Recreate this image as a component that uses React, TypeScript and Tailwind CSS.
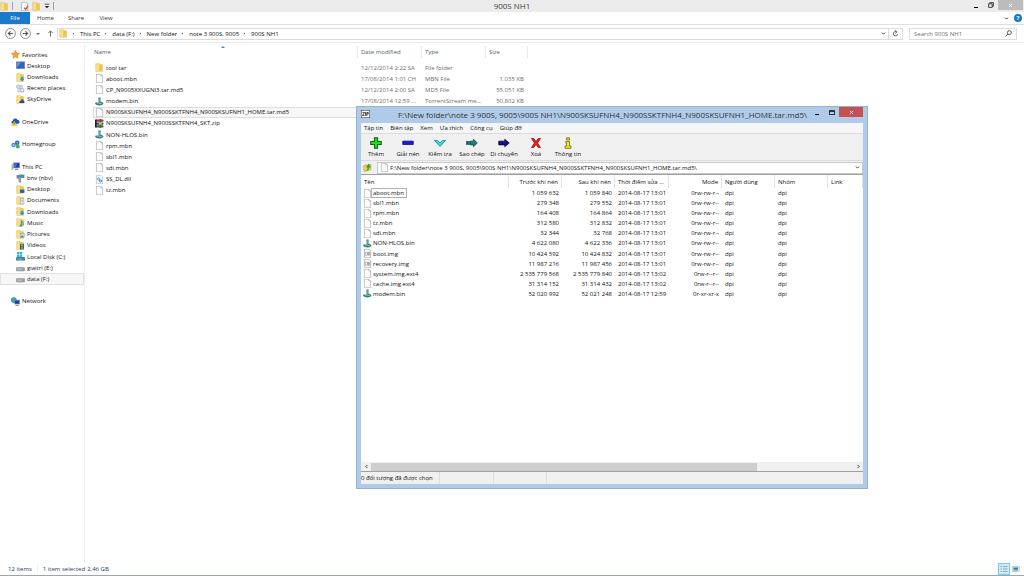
import React from "react";

type IconProps = { className?: string };
type IconType = React.FC<IconProps>;

const svg = (body: React.ReactNode): IconType => {
  const Icon: IconType = ({ className = "size-[9px]" }) => (
    <svg viewBox="0 0 16 16" className={`shrink-0 ${className}`} aria-hidden="true">
      {body}
    </svg>
  );
  return Icon;
};

// Folder body shared by all the library folders
const folderShape = (
  <>
    <path d="M1 1h7l1 1v13H1z" fill="#dfb23c" />
    <path d="M2 2l6-1v14l-6-1z" fill="#f8e08a" />
    <path d="M8 2h5l1 1v12H8z" fill="#ecc757" />
  </>
);

const FolderIcon = svg(folderShape);
const FileIcon = svg(
  <path d="M2.5 0.5h8l3 3v12h-11z M10.5 0.5v3h3" fill="#fdfdfd" stroke="#9a9a9a" />
);
const TorrentIcon = svg(
  <>
    <circle cx="8" cy="3" r="2.5" fill="#5f9cb4" />
    <path d="M6 5h4v4H6z" fill="#5a9fb8" />
    <path d="M0 11c1-3 4 0 8-2 2-1 5 0 7 2 0 2-3 4-7 4s-8-2-8-4z" fill="#2f7f86" />
    <path d="M4 11c3-2 5 2 8 0" stroke="#d6e89a" strokeWidth="1.500" fill="none" />
  </>
);
const RarIcon = svg(
  <>
    <rect x="1" y="1" width="14" height="4" rx="1" fill="#b02a50" />
    <rect x="1" y="6" width="14" height="4" rx="1" fill="#2452a0" />
    <rect x="1" y="11" width="14" height="4" rx="1" fill="#1f7a3f" />
    <rect x="8" y="0" width="3" height="16" fill="#7a4a2b" />
    <rect x="7" y="6" width="5" height="4" fill="#e5c15a" />
    <rect x="0" y="1" width="3" height="14" fill="#3a1828" />
  </>
);
const DllIcon = svg(
  <>
    <path d="M2.5 0.5h8l3 3v12h-11z" fill="#f6fafc" stroke="#9ab0bd" />
    <circle cx="6.500" cy="7" r="2" fill="none" stroke="#4f8fc0" strokeWidth="1.500" />
    <circle cx="10" cy="10.500" r="2" fill="none" stroke="#3a78ad" strokeWidth="1.500" />
  </>
);
const ImgIcon = svg(
  <>
    <path d="M2.500 0.500h8l3 3v12h-11z" fill="#fafafa" stroke="#909090" />
    <path d="M4 6h3M4 6v5h3M8 6h4v5H8zM10 6v5M8 8.500h4" fill="none" stroke="#808080" />
  </>
);
const StarIcon = svg(
  <path d="M8 0.800l2.200 4.700 5 .6-3.700 3.500 1 5.100L8 12.200l-4.500 2.500 1-5.100L.8 6.100l5-.6z" fill="#f9a52b" stroke="#e07a1a" />
);
const DesktopIcon = svg(
  <>
    <rect x="0.500" y="1.500" width="15" height="12" fill="#2f67b8" stroke="#6f7f9a" />
    <path d="M1 2h8l-6 8H1z" fill="#5b93dc" />
  </>
);
const DownloadsIcon = svg(
  <>
    {folderShape}
    <path d="M9 7h4v3h2.500L11 15 6.500 10H9z" fill="#2a9ae0" />
  </>
);
const RecentIcon = svg(
  <>
    <path d="M1 2h10v3l3 9H4L3 6H1z" fill="#dce6ee" stroke="#9aa9b5" />
    <path d="M4 5h5M5 8h4" stroke="#7f94a5" />
    <circle cx="11" cy="11" r="3" fill="#eef6fb" stroke="#7e9bb0" />
  </>
);
const SkyDriveIcon = svg(
  <>
    {folderShape}
    <path d="M6 14c-1-3 2-4 3-4 0-4 5-3 5 1 2 0 2 3 0 3z" fill="#1f4f98" />
  </>
);
const OneDriveIcon = svg(
  <>
    <path d="M3 12c-4-1-2-5 0-5 0-5 7-6 8-2 4-1 6 6 2 7z" fill="#1a56b4" />
    <path d="M6 7l5 8H1z" fill="#ffd02e" stroke="#b88a12" strokeWidth="0.500" />
    <path d="M6 10v3" stroke="#3a3000" strokeWidth="1.200" />
  </>
);
const HomegroupIcon = svg(
  <>
    <circle cx="4.500" cy="9" r="4" fill="#3f8fe0" />
    <circle cx="11" cy="5" r="4" fill="#2a5fc0" />
    <circle cx="12" cy="11.500" r="3.500" fill="#46b04a" />
    <circle cx="4.500" cy="9" r="1.500" fill="#c6e4fb" />
    <circle cx="11" cy="4.500" r="1.500" fill="#8fc3f3" />
  </>
);
const PcIcon = svg(
  <>
    <path d="M1 4h3v10H1z" fill="#a8b4c4" />
    <rect x="4.500" y="1.500" width="11" height="9" fill="#2438b8" stroke="#8f9bb5" />
    <path d="M6 3h5l-3 6H6z" fill="#5878e0" />
    <path d="M7 12h6v2H7z" fill="#76869c" />
  </>
);
const PhoneIcon = svg(
  <>
    <path d="M5 1h10v6H5z" fill="#4a90a8" />
    <path d="M4 5h5v10H5z" fill="#8e9da8" />
    <path d="M1 2h5v6H1z" fill="#6e8899" />
  </>
);
const DesktopFolderIcon = svg(
  <>
    {folderShape}
    <rect x="7" y="8" width="8" height="6" fill="#2d62b0" />
  </>
);
const DocumentsIcon = svg(
  <>
    {folderShape}
    <path d="M8 5h6v9H8z" fill="#eef5fb" stroke="#8aa5bf" />
    <path d="M9.500 8h3M9.500 10h3" stroke="#7a98b8" />
  </>
);
const MusicIcon = svg(
  <>
    {folderShape}
    <path d="M10 14V5c1 3 4 3 3 7" fill="none" stroke="#2387c4" strokeWidth="1.500" />
    <circle cx="8.500" cy="13.500" r="2" fill="#2387c4" />
  </>
);
const PicturesIcon = svg(
  <>
    {folderShape}
    <rect x="7.500" y="6.500" width="7" height="7" fill="#cde8f2" stroke="#7899a8" />
    <path d="M8 13l3-4 3 4z" fill="#3c8c96" />
  </>
);
const VideosIcon = svg(
  <>
    {folderShape}
    <rect x="7" y="5" width="7" height="10" fill="#44525c" />
    <rect x="9" y="6" width="3" height="3" fill="#8ec8e8" />
    <rect x="9" y="10" width="3" height="4" fill="#6fa8c8" />
  </>
);
const SystemDiskIcon = svg(
  <>
    <path d="M2 0h4v4H2zM7 0h4v4H7zM2 5h4v4H2zM7 5h4v4H7z" fill="#1fb3e8" />
    <path d="M0 10l2-1h12l2 1v5H0z" fill="#3d7f92" />
    <path d="M2 12.500h9" stroke="#bfe0ea" />
  </>
);
const DiskIcon = svg(
  <>
    <path d="M0 9l2-2h12l2 2z" fill="#d9d9d9" />
    <rect x="0.500" y="8.500" width="15" height="5.500" rx="1" fill="#b6b9b9" stroke="#777" />
    <rect x="11" y="10" width="3" height="2" fill="#51b34c" />
  </>
);
const NetworkIcon = svg(
  <>
    <circle cx="5" cy="5.500" r="5" fill="#2c8fd0" />
    <path d="M2 3c3-3 5 0 4 2S3 8 2 7z" fill="#53b85a" />
    <rect x="6.500" y="5.500" width="9" height="7" fill="#1d3db2" stroke="#93a4c0" />
    <path d="M8 14h6v1.500H8z" fill="#6c7d92" />
  </>
);
const NoteIcon = svg(
  <>
    <path d="M2.500 0.500h8l3 3v12h-11z" fill="#fff" stroke="#888" />
    <path d="M7 10l3 3 4-6" fill="none" stroke="#d9532c" strokeWidth="2.500" />
  </>
);

const Chevron = svg(<path d="M3 5l5 5 5-5" fill="none" stroke="#333" strokeWidth="3" />);
const TinyArrow = svg(<path d="M5 2l6 6-6 6z" fill="#444" />);
const CloseX = svg(<path d="M3 3l10 10M13 3L3 13" stroke="#fff" strokeWidth="3" />);

type NavItem = { label: string; icon: IconType; child?: boolean; active?: boolean };

// null is an empty line between two groups
const NAV: (NavItem | null)[] = [
  { label: "Favorites", icon: StarIcon },
  { label: "Desktop", icon: DesktopIcon, child: true },
  { label: "Downloads", icon: DownloadsIcon, child: true },
  { label: "Recent places", icon: RecentIcon, child: true },
  { label: "SkyDrive", icon: SkyDriveIcon, child: true },
  null,
  { label: "OneDrive", icon: OneDriveIcon },
  null,
  { label: "Homegroup", icon: HomegroupIcon },
  null,
  { label: "This PC", icon: PcIcon },
  { label: "bnv (nbv)", icon: PhoneIcon, child: true },
  { label: "Desktop", icon: DesktopFolderIcon, child: true },
  { label: "Documents", icon: DocumentsIcon, child: true },
  { label: "Downloads", icon: DownloadsIcon, child: true },
  { label: "Music", icon: MusicIcon, child: true },
  { label: "Pictures", icon: PicturesIcon, child: true },
  { label: "Videos", icon: VideosIcon, child: true },
  { label: "Local Disk (C:)", icon: SystemDiskIcon, child: true },
  { label: "giaitri (E:)", icon: DiskIcon, child: true },
  { label: "data (F:)", icon: DiskIcon, child: true, active: true },
  null,
  { label: "Network", icon: NetworkIcon },
];

type FileRow = { name: string; icon: IconType; date?: string; type?: string; size?: string; active?: boolean };

const FILES: FileRow[] = [
  { name: "tool tar", icon: FolderIcon, date: "12/12/2014 2:22 SA", type: "File folder" },
  { name: "aboot.mbn", icon: FileIcon, date: "17/08/2014 1:01 CH", type: "MBN File", size: "1.035 KB" },
  { name: "CP_N9005XXUGNI3.tar.md5", icon: FileIcon, date: "12/12/2014 2:00 SA", type: "MD5 File", size: "55.051 KB" },
  { name: "modem.bin", icon: TorrentIcon, date: "17/08/2014 12:59 ...", type: "TorrentStream me...", size: "50.802 KB" },
  { name: "N900SKSUFNH4_N900SSKTFNH4_N900SKSUFNH1_HOME.tar.md5", icon: FileIcon, active: true },
  { name: "N900SKSUFNH4_N900SSKTFNH4_SKT.zip", icon: RarIcon },
  { name: "NON-HLOS.bin", icon: TorrentIcon },
  { name: "rpm.mbn", icon: FileIcon },
  { name: "sbl1.mbn", icon: FileIcon },
  { name: "sdi.mbn", icon: FileIcon },
  { name: "SS_DL.dll", icon: DllIcon },
  { name: "tz.mbn", icon: FileIcon },
];

const PATH = ["This PC", "data (F:)", "New folder", "note 3 900S, 9005", "900S NH1"];

const ARCHIVE_PATH = "F:\\New folder\\note 3 900S, 9005\\900S NH1\\N900SKSUFNH4_N900SSKTFNH4_N900SKSUFNH1_HOME.tar.md5\\";

const MENU = ["Tập tin", "Biên tập", "Xem", "Ưa thích", "Công cụ", "Giúp đỡ"];

const TOOLS: { label: string; icon: IconType }[] = [
  { label: "Thêm", icon: svg(<path d="M6 1h4v5h5v4h-5v5H6v-5H1V6h5z" fill="#1fe01f" stroke="#0b6a0b" strokeWidth="1.500" />) },
  { label: "Giải nén", icon: svg(<path d="M1 5.500h14v4.500H1z" fill="#1818e8" stroke="#0a0a80" />) },
  { label: "Kiểm tra", icon: svg(<path d="M0.500 4.500h4L8 8l3.500-3.500h4L8 12.500z" fill="#27e0e8" stroke="#0c8088" />) },
  {
    label: "Sao chép",
    icon: svg(<path d="M0.500 6h1.500v4H0.500zM3 6h2v4H3zM6 5.500h4V3l5 5-5 5v-2.500H6z" fill="#178080" stroke="#0a4a4a" />),
  },
  { label: "Di chuyển", icon: svg(<path d="M1 5.500h8V3l6 5-6 5v-2.500H1z" fill="#10108a" stroke="#050540" />) },
  { label: "Xoá", icon: svg(<path d="M2 2h3l3 4 3-4h3l-4 6 4 6h-3l-3-4-3 4H2l4-6z" fill="#f01c1c" stroke="#8a0808" />) },
  {
    label: "Thông tin",
    icon: svg(<path d="M6 1h4v3H6zM5 6h5v6h2v3H4v-3h2V8H5z" fill="#f0e41c" stroke="#6a6408" />),
  },
];

type Entry = [string, IconType, string, string, string, string];

const ENTRIES: Entry[] = [
  ["aboot.mbn", FileIcon, "1 059 632", "1 059 840", "2014-08-17 13:01", "0rw-rw-r--"],
  ["sbl1.mbn", FileIcon, "279 348", "279 552", "2014-08-17 13:01", "0rw-rw-r--"],
  ["rpm.mbn", FileIcon, "164 408", "164 864", "2014-08-17 13:01", "0rw-rw-r--"],
  ["tz.mbn", FileIcon, "312 580", "312 832", "2014-08-17 13:01", "0rw-rw-r--"],
  ["sdi.mbn", FileIcon, "32 344", "32 768", "2014-08-17 13:01", "0rw-rw-r--"],
  ["NON-HLOS.bin", TorrentIcon, "4 622 080", "4 622 336", "2014-08-17 13:01", "0rw-rw-r--"],
  ["boot.img", ImgIcon, "10 424 592", "10 424 832", "2014-08-17 13:01", "0rw-rw-r--"],
  ["recovery.img", ImgIcon, "11 987 216", "11 987 456", "2014-08-17 13:01", "0rw-rw-r--"],
  ["system.img.ext4", FileIcon, "2 535 779 568", "2 535 779 840", "2014-08-17 13:02", "0rw-r--r--"],
  ["cache.img.ext4", FileIcon, "31 314 152", "31 314 432", "2014-08-17 13:02", "0rw-r--r--"],
  ["modem.bin", TorrentIcon, "52 020 992", "52 021 248", "2014-08-17 12:59", "0r-xr-xr-x"],
];

const TitleBar: React.FC = () => (
  <header className="grid h-3 grid-cols-3 items-center bg-[#ebebeb]">
    <div className="flex items-center gap-[3px]">
      <FolderIcon />
      <span className="h-2 w-px bg-gray-400" />
      <button aria-label="Properties" className="ml-1"><NoteIcon /></button>
      <button aria-label="New folder"><FolderIcon /></button>
      <button aria-label="Customize toolbar">
        <svg viewBox="0 0 8 8" className="size-[6px]"><path d="M1 1h6v1H1zM1 4h6L4 7z" fill="#222" /></svg>
      </button>
      <span className="h-2 w-px bg-gray-400" />
    </div>
    <h1 className="text-center text-[8px] leading-3 text-[#444]">900S NH1</h1>
    <div className="flex h-full items-start justify-end">
      <button aria-label="Minimize" className="mr-[10px] flex h-2 w-1 items-end"><span className="h-px w-full bg-black" /></button>
      <button aria-label="Restore" className="mr-1 pt-[2px]">
        <svg viewBox="0 0 10 10" className="size-[6px]">
          <path d="M3 3V1h6v6H7M1 3h6v6H1z" fill="none" stroke="#333" strokeWidth="1.500" />
        </svg>
      </button>
      <button aria-label="Close" className="mr-px flex h-[10px] w-[25px] items-center justify-center bg-[#bcbcbc]">
        <CloseX className="size-[5px]" />
      </button>
    </div>
  </header>
);

const Ribbon: React.FC = () => (
  <nav className="flex h-[13px] items-center border-b border-[#dfe0e1]">
    <button className="h-full w-[30px] bg-[#1979ca] text-white">File</button>
    <button className="w-[31px] text-[#333]">Home</button>
    <button className="w-[30px] text-[#333]">Share</button>
    <button className="w-[30px] text-[#333]">View</button>
    <button aria-label="Collapse the ribbon" className="ml-auto"><Chevron className="size-[5px]" /></button>
    <button aria-label="Help" className="mr-[2px] ml-[5px] flex size-2 items-center justify-center rounded-full bg-[#1979ca] font-bold text-white">
      ?
    </button>
  </nav>
);

const AddressBar: React.FC = () => (
  <div className="flex h-[18px] items-center border-b border-[#ededed] pr-[7px] pl-[5px]">
    <button aria-label="Back">
      <svg viewBox="0 0 20 20" className="size-[11px]">
        <circle cx="10" cy="10" r="9" fill="none" stroke="#777" strokeWidth="1.500" />
        <path d="M15 10H6M10 6l-4 4 4 4" fill="none" stroke="#555" strokeWidth="2" />
      </svg>
    </button>
    <button aria-label="Forward" className="ml-1">
      <svg viewBox="0 0 20 20" className="size-[11px]">
        <circle cx="10" cy="10" r="9" fill="none" stroke="#777" strokeWidth="1.500" />
        <path d="M5 10h9M10 6l4 4-4 4" fill="none" stroke="#555" strokeWidth="2" />
      </svg>
    </button>
    <button aria-label="Recent locations" className="ml-[5px]">
      <svg viewBox="0 0 8 8" className="size-1"><path d="M0 2h8L4 6z" fill="#666" /></svg>
    </button>
    <button aria-label="Up" className="ml-[7px]">
      <svg viewBox="0 0 16 16" className="size-[7px]">
        <path d="M8 15V3M3 7l5-5 5 5" fill="none" stroke="#555" strokeWidth="2" />
      </svg>
    </button>
    <div className="ml-[3px] flex h-3 flex-1 items-center border border-[#dcdcdc] pl-px">
      <FolderIcon />
      <ol className="flex flex-1 items-center text-[#111]">
        {PATH.map((part) => (
          <li key={part} className="flex items-center">
            <TinyArrow className="mr-[5px] ml-1 size-[3px]" />
            <button>{part}</button>
          </li>
        ))}
      </ol>
      <button aria-label="Previous locations" className="mr-[2px]"><Chevron className="size-[5px]" /></button>
      <button aria-label="Refresh" className="flex h-full w-[14px] items-center justify-center border-l border-[#dcdcdc]">
        <svg viewBox="0 0 16 16" className="size-[7px]">
          <path d="M13 9a5 5 0 1 1-3-5M7 1l4 3-3 4" fill="none" stroke="#555" strokeWidth="2" />
        </svg>
      </button>
    </div>
    <label className="ml-[6px] flex h-3 w-[108px] items-center border border-[#dcdcdc] px-1">
      <input
        type="search"
        aria-label="Search"
        placeholder="Search 900S NH1"
        className="min-w-0 flex-1 outline-none placeholder:text-[#6d6d6d]"
      />
      <svg viewBox="0 0 16 16" className="size-[7px]">
        <circle cx="10" cy="6" r="4.500" fill="none" stroke="#444" strokeWidth="2" />
        <path d="M7 9l-6 6" stroke="#444" strokeWidth="2" />
      </svg>
    </label>
  </div>
);

const Sidebar: React.FC = () => (
  <aside className="w-[85px] shrink-0 border-r border-[#f0f0f0] pt-[6px] text-[#111]">
    <ul className="flex h-[258px] flex-col">
      {NAV.map((item, i) =>
        item ? (
          <li key={i} className="flex min-h-0 flex-1">
            <button
              className={`flex w-full items-center gap-[2px] border ${item.child ? "pl-[15px]" : "pl-[10px]"} ${
                item.active ? "border-[#e2e2e2] bg-[#f7f7f7]" : "border-transparent"
              }`}
            >
              <item.icon />
              {item.label}
            </button>
          </li>
        ) : (
          <li key={i} className="flex-1" aria-hidden="true" />
        )
      )}
    </ul>
  </aside>
);

const FileList: React.FC = () => (
  <main className="min-w-0 flex-1 pt-[3px] pl-2">
    <table className="h-[150px] w-[435px] table-fixed border-separate border-spacing-0 text-left whitespace-nowrap text-[#6d6d6d]">
      <colgroup>
        <col className="w-[264px]" />
        <col className="w-16" />
        <col className="w-16" />
        <col className="w-[43px]" />
      </colgroup>
      <thead className="text-[#4c607a]">
        <tr className="h-4 align-top">
          <th className="pl-px font-normal">
            <div className="flex h-3 items-start">
              <span className="flex-1 leading-3">Name</span>
              <svg viewBox="0 0 8 4" className="mr-[132px] h-[2px] w-1"><path d="M0 4l4-4 4 4z" fill="#3c8dc5" /></svg>
            </div>
          </th>
          <th className="font-normal"><div className="h-3 border-l border-[#e2ecf5] pl-[3px] leading-3">Date modified</div></th>
          <th className="font-normal"><div className="h-3 border-l border-[#e2ecf5] pl-[3px] leading-3">Type</div></th>
          <th className="font-normal"><div className="h-3 border-x border-[#e2ecf5] pl-[3px] leading-3">Size</div></th>
        </tr>
      </thead>
      <tbody>
        {FILES.map((f) => (
          <tr key={f.name} className={f.active ? "bg-[#f7f7f7] outline outline-1 -outline-offset-1 outline-[#dedede]" : ""}>
            <td className="pl-[2px]">
              <div className="flex items-center gap-[2px] text-[#111]"><f.icon />{f.name}</div>
            </td>
            <td className="pl-1">{f.date}</td>
            <td className="pl-1">{f.type}</td>
            <td className="pr-1 text-right">{f.size}</td>
          </tr>
        ))}
      </tbody>
    </table>
  </main>
);

const StatusBar: React.FC = () => (
  <footer className="flex h-[13px] items-center border-b border-[#9aa5b0] pl-2 text-[#1e395b]">
    <span>12 items</span>
    <span className="ml-[5px] h-2 w-px bg-[#f0f0f0]" />
    <span className="ml-[5px]">1 item selected</span>
    <span className="ml-[2px]">2,46 GB</span>
    <button aria-label="Details view" className="ml-auto flex size-3 items-center justify-center border border-[#7fc8ea] bg-[#cfeaf7]">
      <svg viewBox="0 0 16 16" className="size-2">
        <path d="M1 3h3M1 8h3M1 13h3M6 3h9M6 8h9M6 13h9" stroke="#6f95a8" strokeWidth="1.500" />
      </svg>
    </button>
    <button aria-label="Large icons view" className="mr-1 ml-[2px]">
      <svg viewBox="0 0 16 16" className="size-2">
        <rect x="1" y="3" width="14" height="10" fill="#d9edf8" stroke="#8eb0c4" />
        <rect x="3" y="5" width="9" height="4" fill="#2f80a8" />
        <rect x="3" y="9" width="9" height="2" fill="#3d9c5c" />
      </svg>
    </button>
  </footer>
);

const th = "truncate border-r border-[#e5e5e5] px-[3px] font-normal";

const ArchiveWindow: React.FC = () => (
  <section
    aria-label="Archive"
    className="absolute top-[106px] left-[356px] flex h-[383px] w-[512px] flex-col border border-[#94b2d2] bg-[#b0cbe8] px-1 pb-1 text-[#111]"
  >
    <div className="flex h-4 items-start">
      <svg viewBox="0 0 18 16" className="mt-[3px] h-2 w-[9px]">
        <rect x="0.500" y="0.500" width="17" height="15" fill="#fff" stroke="#222" />
        <path d="M3 5h4l-4 6h4M9 4.500v7M11.500 12V5h3v3h-3" fill="none" stroke="#111" strokeWidth="1.500" />
      </svg>
      <h2 className="min-w-0 flex-1 pr-2 text-right text-[8px] leading-4 whitespace-nowrap text-[#333]">{ARCHIVE_PATH}</h2>
      <button aria-label="Minimize" className="flex h-2 w-1 items-end"><span className="h-px w-full bg-black" /></button>
      <button aria-label="Maximize" className="mt-[3px] mr-1 ml-[10px] h-[5px] w-[6px] border border-t-2 border-[#333]" />
      <button aria-label="Close" className="flex h-[10px] w-6 items-center justify-center bg-[#c75050]">
        <CloseX className="size-[5px]" />
      </button>
    </div>
    <nav className="flex h-[10px] items-center gap-[7px] bg-[#f5f6f7] pl-[3px]">
      {MENU.map((m) => <button key={m}>{m}</button>)}
    </nav>
    <div className="flex h-[27px] items-center border-t border-[#dcdcdc] bg-[#f0f0f0]">
      {TOOLS.map((t) => (
        <button key={t.label} className="flex w-8 shrink-0 flex-col items-center gap-px whitespace-nowrap pr-[2px]">
          <t.icon className="size-3" />
          {t.label}
        </button>
      ))}
    </div>
    <div className="flex h-[14px] items-center border-t border-[#dcdcdc] bg-[#f0f0f0]">
      <button aria-label="Up one level" className="w-4 pl-[2px]">
        <svg viewBox="0 0 16 16" className="size-[9px]">
          <path d="M1 5l5-2 2 1 6-2v10L2 15z" fill="#f5d547" stroke="#b8962a" />
          <path d="M4 14c4-1 4-4 4-6H5l5-7 4 7h-3c0 4-3 6-7 6z" fill="#28a83c" />
        </svg>
      </button>
      <label className="flex h-3 flex-1 items-center border border-[#c8c8c8] bg-white px-[2px]">
        <FileIcon />
        <select aria-label="Path" className="min-w-0 flex-1 appearance-none pl-px outline-none">
          <option>{ARCHIVE_PATH}</option>
        </select>
        <Chevron className="size-[5px]" />
      </label>
    </div>
    <div className="min-h-0 flex-1 border-t border-[#a0a0a0] bg-white">
      <table className="h-[124px] w-full table-fixed border-separate border-spacing-0 text-left whitespace-nowrap">
        <colgroup>
          <col className="w-[148px]" />
          <col className="w-[53px]" />
          <col className="w-[53px]" />
          <col className="w-[54px]" />
          <col className="w-[53px]" />
          <col className="w-[53px]" />
          <col className="w-[53px]" />
          <col />
        </colgroup>
        <thead>
          <tr className="h-[13px]">
            <th className={th}>Tên</th>
            <th className={`${th} text-right`}>Trước khi nén</th>
            <th className={`${th} text-right`}>Sau khi nén</th>
            <th className={th}>Thời điểm sửa ...</th>
            <th className={`${th} text-right`}>Mode</th>
            <th className={th}>Người dùng</th>
            <th className={th}>Nhóm</th>
            <th className={th}>Link</th>
          </tr>
        </thead>
        <tbody>
          {ENTRIES.map(([name, Icon, before, after, time, mode], i) => (
            <tr key={name}>
              <td className="pl-[2px]">
                <div className="flex items-center">
                  <Icon />
                  <span className={i === 0 ? "outline outline-1 outline-[#b0b0b0] pl-px pr-[2px]" : "pl-px"}>{name}</span>
                </div>
              </td>
              <td className="pr-[3px] text-right">{before}</td>
              <td className="pr-[3px] text-right">{after}</td>
              <td className="pl-[3px]">{time}</td>
              <td className="pr-[3px] text-right">{mode}</td>
              <td className="pl-[3px]">dpi</td>
              <td className="pl-[3px]">dpi</td>
              <td />
            </tr>
          ))}
        </tbody>
      </table>
    </div>
    <div className="flex h-[9px] items-center bg-[#f0f0f0]">
      <button aria-label="Scroll left" className="flex w-[10px] justify-center"><Chevron className="size-[5px] rotate-90" /></button>
      <div className="flex h-2 flex-1">
        <div className="w-4/5 bg-[#cdcdcd]" />
      </div>
      <button aria-label="Scroll right" className="flex w-[10px] justify-center"><Chevron className="size-[5px] -rotate-90" /></button>
    </div>
    <footer className="flex h-[13px] items-center border-t border-[#a0a0a0] bg-[#f0f0f0]">
      <span className="flex h-full w-[79px] items-center border-r border-[#dcdcdc] whitespace-nowrap">0 đối tượng đã được chọn</span>
      <span className="h-full w-[54px] border-r border-[#dcdcdc]" />
      <span className="h-full w-[53px] border-r border-[#dcdcdc]" />
    </footer>
  </section>
);

const App: React.FC = () => (
  <div className="relative flex h-screen flex-col overflow-hidden bg-white font-['Open_Sans','Noto_Sans',sans-serif] text-[6px] leading-[8px]">
    <TitleBar />
    <Ribbon />
    <AddressBar />
    <div className="flex min-h-0 flex-1">
      <Sidebar />
      <FileList />
    </div>
    <StatusBar />
    <ArchiveWindow />
  </div>
);

export default App;
